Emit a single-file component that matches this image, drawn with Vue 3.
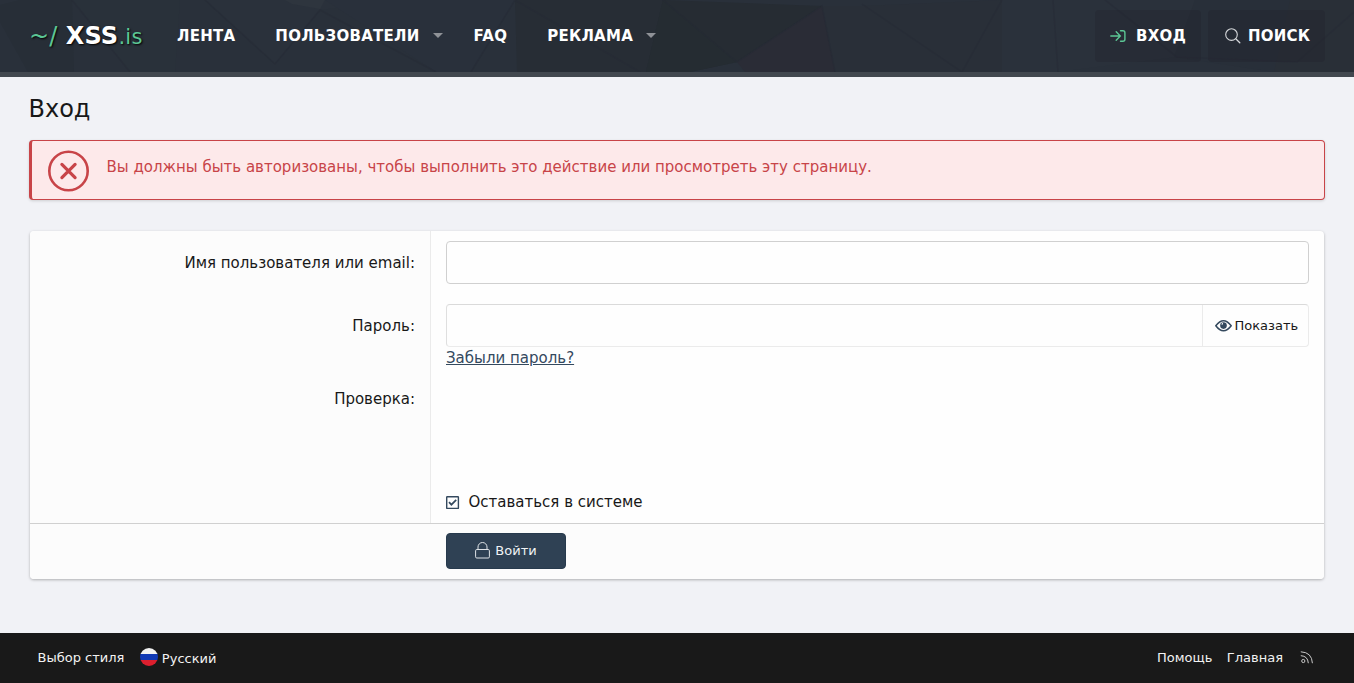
<script setup>
import { ref } from 'vue'

const nav = [
  { title: 'ЛЕНТА', menu: false },
  { title: 'ПОЛЬЗОВАТЕЛИ', menu: true },
  { title: 'FAQ', menu: false },
  { title: 'РЕКЛАМА', menu: true },
]
const login = ref('')
const password = ref('')
const shown = ref(false)
const remember = ref(true)
</script>

<template>
  <div class="page">
    <header class="header">
      <svg class="facets" viewBox="0 0 1354 72" preserveAspectRatio="none" aria-hidden="true">
        <rect width="1354" height="72" fill="#29303a" />
        <path d="M0 5 20 0H72L74 72H28L0 22Z" fill="#272e37" />
        <path d="M72 0h108l-5 72H130Z" fill="#29313a" />
        <path d="M205 0h60L400 0 320 10 275 64Z" fill="#2a313b" />
        <path d="M285 0h40l-5 9-28-5Z" fill="#2e353e" />
        <path d="M325 0h190l-44 72h-35Z" fill="#29303b" />
        <path d="M515 0h148l-17 72H517Z" fill="#272d35" />
        <path d="M663 0 822 6 737 62 690 72h-44Z" fill="#262c33" />
        <path d="M663 0 737 62 690 72h-44Z" fill="#252c32" />
        <path d="M822 6 737 62 745 72h90Z" fill="#2a2c36" />
        <path d="M822 6h40l140-6v72H835Z" fill="#292f38" />
        <path d="M1002 0h200l-25 57-120 15h-55Z" fill="#2a313b" />
        <path d="M1195 0h159v72h-80l-100-15Z" fill="#282f39" />
        <path d="M1290 0h64v72h-80Z" fill="#292f37" />
        <path d="M72 0l58 72M205 0l70 64 45-54 116 62M515 0l125 72M515 0l-44 72M663 0l74 62 85-56 13 66M862 4l100 68 40-72M1053 0l5 72M1105 0l72 57 120 5 57-50" fill="none" stroke="#252b36" stroke-width="1.5" opacity=".45" />
      </svg>
      <a class="logo"><span class="tilde">~/</span> <b>XSS</b><span>.is</span></a>
      <nav class="nav">
        <a v-for="item in nav" :key="item.title" class="nav-item">
          {{ item.title }}<i v-if="item.menu" class="caret"></i>
        </a>
      </nav>
      <div class="tools">
        <a class="tool enter">
          <svg width="16" height="12" viewBox="0 0 16 12"><path d="M.8 6H10M6.200 1.800 10.300 6l-4.100 4.200M10.500.8h2.400q2 0 2 2v6.400q0 2-2 2h-2.400" fill="none" stroke="#5cc795" stroke-width="1.400" stroke-linecap="round" /></svg>
          ВХОД
        </a>
        <a class="tool search">
          <svg width="16" height="16" viewBox="0 0 16 16"><path d="M11 11l3.800 3.800" stroke="#d5d7da" stroke-width="1.300" stroke-linecap="round" /><circle cx="6.500" cy="6.600" r="5.800" fill="none" stroke="#d5d7da" stroke-width="1.100" /></svg>
          ПОИСК
        </a>
      </div>
    </header>

    <main class="content">
      <h1>Вход</h1>
      <div class="notice">
        <svg width="42" height="42" viewBox="0 0 42 42"><g fill="none" stroke="#c84448"><circle cx="21.500" cy="21" r="19.200" stroke-width="2.600" /><path d="M14.900 14.400 28.100 27.600M28.100 14.400 14.900 27.600" stroke-width="3.200" stroke-linecap="round" /></g></svg>
        <p>Вы должны быть авторизованы, чтобы выполнить это действие или просмотреть эту страницу.</p>
      </div>

      <form class="block" @submit.prevent>
        <div class="row">
          <label class="label">Имя пользователя или email:</label>
          <div class="field"><input v-model="login" class="input" type="text" /></div>
        </div>
        <div class="row">
          <label class="label">Пароль:</label>
          <div class="field">
            <div class="group">
              <input v-model="password" :type="shown ? 'text' : 'password'" />
              <button type="button" class="show" @click="shown = !shown">
                <svg width="17" height="12" viewBox="0 0 17 12"><path d="M.8 5.800q7.700-10 15.400 0-7.700 10-15.400 0Z" fill="none" stroke="#34495e" stroke-width="1.500" stroke-linejoin="round" /><circle cx="8.500" cy="5.600" r="3.300" fill="#34495e" /><path d="M6.300 4.500q.4-1.400 1.700-1.400v1.400Z" fill="#fff" /></svg>
                Показать
              </button>
            </div>
            <a class="forgot">Забыли пароль?</a>
          </div>
        </div>
        <div class="row captcha">
          <label class="label">Проверка:</label>
          <div class="field"></div>
        </div>
        <div class="row last">
          <div class="label"></div>
          <div class="field">
            <label class="check" @click.prevent="remember = !remember">
              <svg width="14" height="14" viewBox="0 0 14 14"><rect x=".7" y=".7" width="11.700" height="11.700" rx=".5" fill="none" stroke="#34495e" stroke-width="1.400" /><path v-if="remember" d="m3 6.200 2.400 2.500 4.800-4.800" fill="none" stroke="#34495e" stroke-width="1.700" /></svg>
              Оставаться в системе
            </label>
          </div>
        </div>
        <div class="submit">
          <button type="submit" class="primary">
            <svg width="15" height="17" viewBox="0 0 15 17"><g fill="none" stroke="#dfe3e7"><rect x=".6" y="7.500" width="13.800" height="8.500" rx="1.200" /><path d="M3 7.500V5a4.500 4.500 0 0 1 9 0v2.500" /></g></svg>
            Войти
          </button>
        </div>
      </form>
    </main>

    <footer class="footer">
      <a>Выбор стиля</a>
      <a class="lang">
        <svg width="18" height="18" viewBox="0 0 18 18"><clipPath id="disc"><circle cx="9" cy="9" r="9" /></clipPath><g clip-path="url(#disc)"><path d="M0 0h18v6H0z" fill="#f2f2f2" /><path d="M0 6h18v6H0z" fill="#1039b5" /><path d="M0 12h18v6H0z" fill="#dc1f2e" /></g></svg>
        <span>Русский</span>
      </a>
      <a class="help">Помощь</a>
      <a class="home">Главная</a>
      <svg class="rss" width="13" height="13" viewBox="0 0 13 13"><g fill="none" stroke="#c8c8c8"><circle cx="3.300" cy="10" r="1.600" /><path d="M1.200 4.700Q7.800 5 8.300 11.800M1.200.800Q11.900 1.300 12.400 11.800" stroke-linecap="round" /></g></svg>
    </footer>
  </div>
</template>

<style>
body { background: #f1f2f6; }
</style>

<style scoped>
* { box-sizing: border-box; }
.page {
  height: 683px;
  display: flex;
  flex-direction: column;
  overflow: hidden;
  font: 15px/21px "DejaVu Sans", sans-serif;
  color: #181818;
}
.header {
  position: relative;
  isolation: isolate;
  flex: none;
  height: 77px;
  border-bottom: 5px solid #42484f;
  padding: 0 29px;
  display: flex;
  align-items: center;
}
.facets { position: absolute; inset: 0; width: 100%; height: 72px; z-index: -1; }
.logo {
  width: 128px;
  font-size: 21px;
  line-height: 30px;
  letter-spacing: .25px;
  white-space: nowrap;
  color: #5cc795;
  text-shadow: 1px 1px 2px #000;
}
.tilde { font-size: 24px; margin-right: 1px; }
.logo b { color: #fff; font-size: 24px; }
.nav { display: flex; }
.nav-item {
  display: flex;
  align-items: center;
  padding: 0 20px;
  font-weight: 700;
  letter-spacing: .25px;
  color: #fff;
}
.nav-item:has(.caret) { padding-right: 11px; }
.caret {
  margin: 0 0 2px 13px;
  border: 5px solid transparent;
  border-top-color: #8f9297;
  border-bottom: 0;
}
.tools { margin-left: auto; display: flex; gap: 7px; color: #fff; font-weight: 700; letter-spacing: .25px; }
.tool {
  height: 52px;
  display: flex;
  align-items: center;
  background: rgba(32, 32, 42, .3);
  border-radius: 4px;
}
.enter { width: 106px; padding-left: 15px; gap: 10px; }
.search { width: 117px; padding-left: 17px; gap: 7px; }
.tool svg { margin-bottom: 1px; }
.content { padding: 0 29px; flex: 1; }
h1 { margin: 18px 0 16px -.5px; font-size: 24px; line-height: 29px; font-weight: 400; }
.notice {
  height: 60px;
  display: flex;
  align-items: flex-start;
  padding: 9px 0 0 15px;
  gap: 17.500px;
  border: 1px solid #c84448;
  border-left-width: 3px;
  border-radius: 4px;
  background: #fde9ea;
  color: #c84448;
  box-shadow: 0 1px 3px rgba(0, 0, 0, .15);
}
.notice p { margin: 7px 0 0; }
.block {
  margin: 31px 1px 0;
  background: #fefefe;
  border-radius: 4px;
  box-shadow: 0 1px 3px rgba(0, 0, 0, .28);
}
.row { display: flex; min-height: 63px; }
.label {
  width: 401px;
  padding: 22px 15px 0 0;
  text-align: right;
  background: #fcfcfc;
  border-right: 1px solid #ebebeb;
}
.row:first-child .label { border-top-left-radius: 4px; }
.field { flex: 1; padding: 10px 15px; }
.input {
  display: block;
  width: 100%;
  height: 43px;
  border: 1px solid #d0d0d0;
  border-radius: 4px;
  background: #fefefe;
}
.group {
  height: 43px;
  display: flex;
  border: 1px solid #ebebeb;
  border-top-color: #dadada;
  border-left-color: #dfdfdf;
  border-radius: 4px;
}
.group input { flex: 1; border: 0; background: none; outline: none; }
.show {
  width: 106px;
  display: flex;
  align-items: center;
  gap: 3px;
  padding: 0 0 0 11.500px;
  border: 0;
  border-left: 1px solid #ebebeb;
  background: none;
  font: 13px "DejaVu Sans", sans-serif;
  color: #181818;
}
.forgot { display: block; width: max-content; margin-top: 1px; color: #34495e; text-decoration: underline; }
.row:nth-child(2) { height: 83px; }
.captcha { height: 104px; }
.captcha .label { padding-top: 12px; }
.last { min-height: 0; height: 42px; }
.last .field { padding-top: 11px; }
.check { display: flex; align-items: center; gap: 8.500px; }
.submit {
  height: 56px;
  padding: 9px 0 0 416px;
  border-top: 1px solid #d0d0d0;
  background: #fcfcfc;
  border-radius: 0 0 4px 4px;
}
.primary {
  width: 120px;
  height: 36px;
  display: flex;
  align-items: center;
  justify-content: center;
  gap: 5px;
  padding-bottom: 2px;
  border: 1px solid #273a4d;
  border-radius: 4px;
  background: #2f4154;
  color: #f0f2f4;
  font: 13px "DejaVu Sans", sans-serif;
}
.footer {
  flex: none;
  height: 50px;
  display: flex;
  align-items: center;
  padding: 0 41px 2px 37.500px;
  background: #191919;
  color: #f2f2f2;
  font-size: 13px;
}
.lang { display: flex; align-items: center; gap: 4px; margin-left: 15.500px; }
.lang span { padding-top: 2px; }
.help { margin-left: auto; }
.home { margin: 0 17px 0 14.500px; }
</style>
